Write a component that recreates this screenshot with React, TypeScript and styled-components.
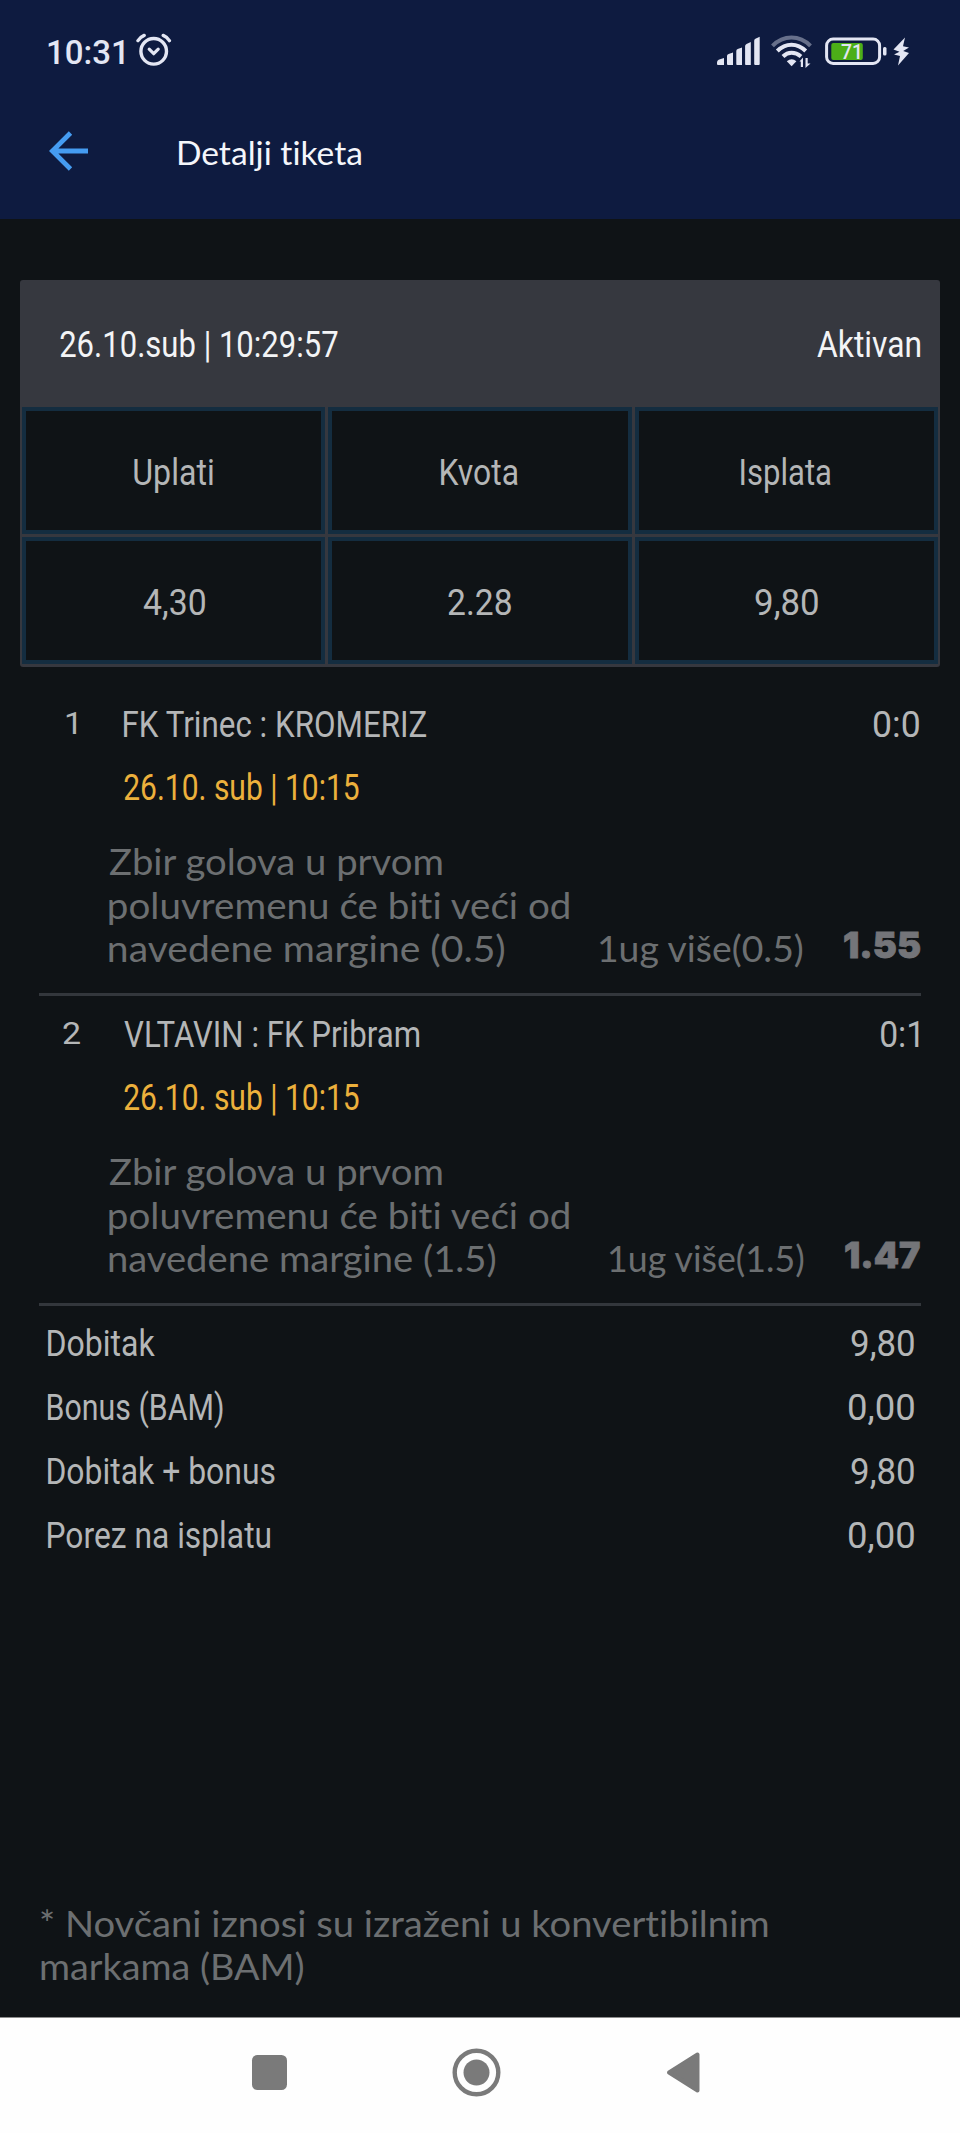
import React, { useLayoutEffect, useRef, useState } from "react";
import styled, { createGlobalStyle } from "styled-components";

const GlobalStyle = createGlobalStyle`
  * { box-sizing: border-box; }
  body { margin: 0; background: #0f1316; }
`;

const Screen = styled.div`
  display: flex;
  flex-direction: column;
  width: 960px;
  height: 2133px;
  background: #0f1316;
  color: #b4b6b7;
  font-family: Roboto, "Open Sans", sans-serif;
  font-size: 37px;
  letter-spacing: 0.01px;
  overflow: hidden;
`;

/* ---------- text set to an exact measure ---------- */

const Measure = styled.span<{ $width: number }>`
  display: block;
  flex: none;
  width: ${(p) => p.$width}px;
  white-space: nowrap;
`;

const Glyphs = styled.span`
  display: block;
  width: max-content;
  transform-origin: 0 50%;
`;

function Fit({ width, children }: { width: number; children: string }) {
  const ref = useRef<HTMLSpanElement>(null);
  const [transform, setTransform] = useState("none");

  useLayoutEffect(() => {
    const ctx = document.createElement("canvas").getContext("2d");
    if (!ref.current || !ctx) return;
    const css = getComputedStyle(ref.current);
    ctx.font = `${css.fontWeight} ${css.fontSize} ${css.fontFamily}`;
    ctx.letterSpacing = css.letterSpacing;
    const m = ctx.measureText(children);
    const scale = width / (m.actualBoundingBoxRight + m.actualBoundingBoxLeft);
    setTransform(`translateX(${m.actualBoundingBoxLeft * scale}px) scaleX(${scale})`);
  }, [width, children]);

  return (
    <Measure $width={width}>
      <Glyphs ref={ref} style={{ transform }}>{children}</Glyphs>
    </Measure>
  );
}

/* ---------- header ---------- */

const Header = styled.header`
  flex: none;
  height: 219px;
  background: #0e1b40;
`;

const StatusBar = styled.div`
  display: flex;
  align-items: center;
  justify-content: space-between;
  height: 104px;
  padding: 0 49px 0 48px;
  color: #e3e6f3;
`;

const StatusGroup = styled.div`
  display: flex;
  align-items: center;
`;

const Clock = styled.div`
  font: 500 33px/40px Roboto, sans-serif;
  margin: 1px 12px 0 0;
`;

const AlarmSvg = styled.svg`
  margin-bottom: 4px;
`;

const BatteryText = styled.text`
  font: 500 20px Roboto, sans-serif;
`;

const TitleBar = styled.div`
  display: flex;
  align-items: center;
  height: 94px;
  padding-left: 49px;
`;

const Title = styled.h1`
  margin: 3px 0 0 89px;
  color: #f4f6fb;
  font-family: Lato, sans-serif;
  font-size: 32px;
  font-weight: 400;
  line-height: 40px;
`;

/* ---------- ticket card ---------- */

const Card = styled.section`
  flex: none;
  margin: 61px 20px 0;
  height: 387px;
  padding: 0 2px 3px;
  border-radius: 3px;
  background: #36383f;
`;

const CardHead = styled.div`
  display: flex;
  align-items: center;
  justify-content: space-between;
  height: 127px;
  padding: 2px 18px 0 38px;
  color: #f3f4f6;
`;

const Grid = styled.div`
  display: grid;
  grid-template-columns: repeat(3, 1fr);
  grid-template-rows: 127px 127px;
  gap: 3px;
`;

const Cell = styled.div`
  display: flex;
  align-items: center;
  justify-content: center;
  padding-top: 3px;
  border: 4px solid #142d40;
  background: #0f1316;
`;

/* ---------- matches ---------- */

const Matches = styled.div`
  margin: 19px 39px 0;
`;

const Match = styled.article`
  height: 310px;
  border-bottom: 3px solid #33373c;
`;

const MatchHead = styled.div`
  display: flex;
  align-items: center;
  height: 75px;
  padding: 1px 2px 0 0;
`;

const Order = styled.div`
  display: flex;
  justify-content: center;
  width: 65px;
  margin-right: 20px;
  padding-bottom: 3px;
  font-size: 32px;
`;

const Score = styled.div`
  margin-left: auto;
`;

const Kickoff = styled.div`
  padding-left: 85px;
  height: 51px;
  line-height: 54px;
  color: #ecb03c;
`;

const Bet = styled.div`
  display: flex;
  align-items: flex-end;
  padding: 28px 1px 0 70px;
  color: #6c6f71;
  font-family: Lato, sans-serif;
  font-size: 36px;
  line-height: 43.7px;
`;

const Pick = styled.div`
  display: flex;
  margin-left: auto;
`;

const Odds = styled.div<{ $gap: number }>`
  margin: 0 0 3px ${(p) => p.$gap}px;
  color: #747579;
  font-family: Inter, sans-serif;
  font-weight: 900;
  -webkit-text-stroke: 0.8px currentColor;
`;

/* ---------- totals and note ---------- */

const Totals = styled.div`
  padding: 6px 46px 0 48px;
`;

const TotalRow = styled.div`
  display: flex;
  justify-content: space-between;
  line-height: 64px;
`;

const Note = styled.div`
  margin: auto 0 0 41px;
  padding-bottom: 28px;
  color: #6c6f71;
  font-family: Lato, sans-serif;
  font-size: 36px;
  line-height: 43.7px;
`;

const NavBar = styled.nav`
  display: flex;
  flex: none;
  justify-content: center;
  height: 116px;
  border-top: 1px solid #8b8b8b;
  background: #fefefe;
`;

/* ---------- icons ---------- */

const Alarm = () => (
  <AlarmSvg width="36" height="34" viewBox="0 0 36 34" fill="none" stroke="currentColor" strokeLinecap="round">
    <circle cx="17.7" cy="18.3" r="12.8" strokeWidth="3.4" />
    <path d="M2 7.6Q4.5 4 8.2 2.4M27.2 2.4Q31 4 33.4 7.6" strokeWidth="3.4" />
    <path d="M13.2 16.2l4.5 4.5 4.5-4.5" strokeWidth="3.2" strokeLinejoin="round" />
  </AlarmSvg>
);

const StatusIcons = () => (
  <svg width="194" height="36" viewBox="0 0 194 36" fill="currentColor">
    <path d="M0 28.8Q0 26 3 25.2L7 24V31H1Q0 31 0 30ZM10 22q0-1.600 1.600-2L16 18.600V31h-5q-1 0-1-1ZM19.300 17q0-1.600 1.400-2l4.300-1.600V31h-5q-.7 0-.7-1ZM28.100 12q0-1.400 1.400-2.100l4.300-2V31h-5q-.7 0-.7-1ZM37.200 6.700q0-1.400 1.200-2l4.300-2V30q0 1-1 1h-3.500q-1 0-1-1Z" />
    <g fill="none" stroke="currentColor" strokeWidth="4">
      <path d="M55.500 11.800C66.500 .7 82.500 .7 93.500 11.800" opacity=".42" />
      <path d="M60.300 17C68.700 8.600 80.300 8.600 88.700 17" />
      <path d="M66 22.500C71 17.500 78 17.500 84 22.500" />
    </g>
    <path d="M69.800 27.300q5-4.300 9.600 0L74.600 32.300Z" />
    <path d="M82.500 27.500L86 23.500V33H83.800V27.500ZM88.500 24h2.200v5.500H93.500L88.500 34Z" />
    <rect x="109.600" y="5.100" width="53" height="24.300" rx="6.500" fill="none" stroke="currentColor" strokeWidth="3" />
    <rect x="114.300" y="9" width="31.500" height="17" rx="2" fill="#4cae18" />
    <BatteryText x="124" y="25" textLength="22" lengthAdjust="spacingAndGlyphs">71</BatteryText>
    <rect x="166" y="13" width="3.500" height="8.500" rx="1.500" />
    <path d="M188 3.500L176.500 15.500l6 2.200-5.500 2.800 6 1.600L181 31.500 192 19l-5.800-2 5.800-3.500-6-1.200Z" />
  </svg>
);

const BackArrow = () => (
  <svg width="40" height="40" viewBox="0 0 40 40" fill="none" stroke="#459cf1" strokeWidth="4.800">
    <path d="M21.500 2L3.400 20 21.500 38M3.400 20H39" />
  </svg>
);

const NavIcons = () => (
  <svg width="460" height="110" viewBox="0 0 460 110" fill="#7a7a7a">
    <rect x="2" y="37" width="35" height="35" rx="5.500" />
    <circle cx="226.500" cy="54.500" r="21.800" fill="none" stroke="#7a7a7a" strokeWidth="4.400" />
    <circle cx="226.500" cy="54.500" r="13" />
    <path d="M447.500 36.500V72.500L419 54.500Z" stroke="#7a7a7a" strokeWidth="4" strokeLinejoin="round" />
  </svg>
);

/* ---------- data ---------- */

type Sized = [text: string, width: number];

const columns: Sized[] = [["Uplati", 79], ["Kvota", 77], ["Isplata", 90]];
const values: Sized[] = [["4,30", 62], ["2.28", 63], ["9,80", 63]];

const matches: {
  order: Sized; teams: Sized; score: Sized; tip: Sized[]; pick: Sized; odds: Sized; gap: number;
}[] = [
  {
    order: ["1", 10.5],
    teams: ["FK Trinec : KROMERIZ", 303],
    score: ["0:0", 45],
    tip: [["Zbir golova u prvom", 334], ["poluvremenu će biti veći od", 461], ["navedene margine (0.5)", 395]],
    pick: ["1ug više(0.5)", 204],
    odds: ["1.55", 76],
    gap: 41,
  },
  {
    order: ["2", 17],
    teams: ["VLTAVIN : FK Pribram", 295],
    score: ["0:1", 38],
    tip: [["Zbir golova u prvom", 334], ["poluvremenu će biti veći od", 461], ["navedene margine (1.5)", 386]],
    pick: ["1ug više(1.5)", 195],
    odds: ["1.47", 75],
    gap: 41,
  },
];

const totals: { label: Sized; value: Sized }[] = [
  { label: ["Dobitak", 107], value: ["9,80", 63] },
  { label: ["Bonus (BAM)", 175], value: ["0,00", 65] },
  { label: ["Dobitak + bonus", 227], value: ["9,80", 63] },
  { label: ["Porez na isplatu", 222], value: ["0,00", 65] },
];

const fit = ([text, width]: Sized) => <Fit key={text} width={width}>{text}</Fit>;

export default function App() {
  return (
    <Screen>
      <GlobalStyle />
      <Header>
        <StatusBar>
          <StatusGroup>
            <Clock><Fit width={76}>10:31</Fit></Clock>
            <Alarm />
          </StatusGroup>
          <StatusIcons />
        </StatusBar>
        <TitleBar>
          <BackArrow />
          <Title><Fit width={183}>Detalji tiketa</Fit></Title>
        </TitleBar>
      </Header>

      <Card>
        <CardHead>
          <Fit width={278}>26.10.sub | 10:29:57</Fit>
          <Fit width={103}>Aktivan</Fit>
        </CardHead>
        <Grid>
          {[...columns, ...values].map((c) => <Cell key={c[0]}>{fit(c)}</Cell>)}
        </Grid>
      </Card>

      <Matches>
        {matches.map((m) => (
          <Match key={m.order[0]}>
            <MatchHead>
              <Order>{fit(m.order)}</Order>
              {fit(m.teams)}
              <Score>{fit(m.score)}</Score>
            </MatchHead>
            <Kickoff><Fit width={235}>26.10. sub | 10:15</Fit></Kickoff>
            <Bet>
              <div>{m.tip.map(fit)}</div>
              <Pick>{fit(m.pick)}</Pick>
              <Odds $gap={m.gap}>{fit(m.odds)}</Odds>
            </Bet>
          </Match>
        ))}
      </Matches>

      <Totals>
        {totals.map((t) => (
          <TotalRow key={t.label[0]}>{fit(t.label)}{fit(t.value)}</TotalRow>
        ))}
      </Totals>

      <Note>
        <Fit width={727}>* Novčani iznosi su izraženi u konvertibilnim</Fit>
        <Fit width={262}>markama (BAM)</Fit>
      </Note>

      <NavBar><NavIcons /></NavBar>
    </Screen>
  );
}
